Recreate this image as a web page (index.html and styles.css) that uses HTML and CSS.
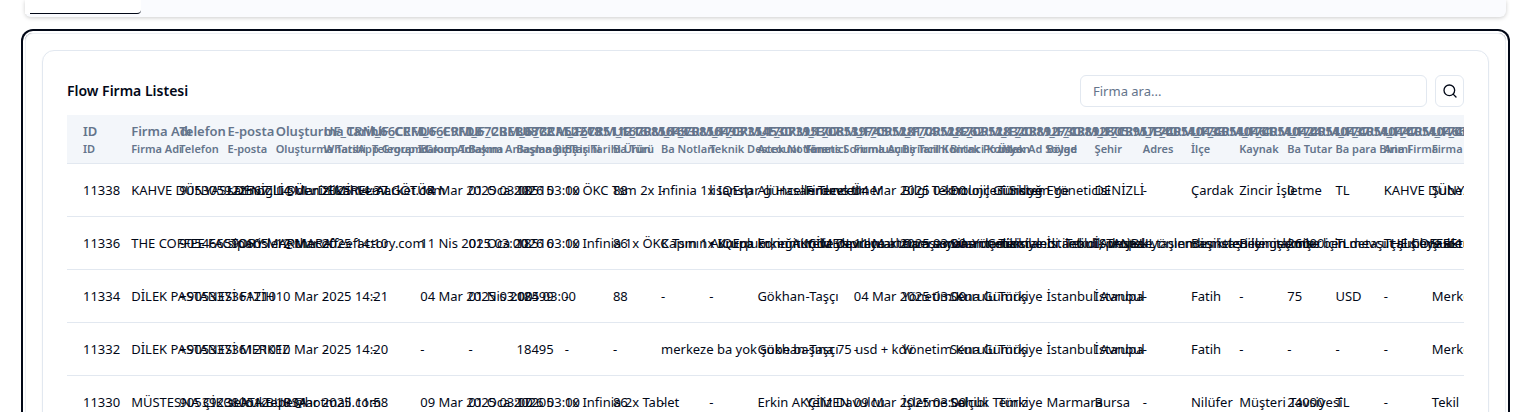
FILE: index.html
```
<!DOCTYPE html>
<html lang="tr">
<head>
<meta charset="utf-8">
<title>Flow Firma Listesi</title>
<link rel="stylesheet" href="styles.css">
</head>
<body>
<nav class="tabs"><button class="tab" type="button" aria-label="Firmalar"></button></nav>
<main class="panel">
<section class="card">
<header class="card-head">
<h1 class="title">Flow Firma Listesi</h1>
<form class="search">
<input class="search-input" type="text" placeholder="Firma ara..." aria-label="Firma ara">
<button class="search-button" type="button" aria-label="Ara">
<svg class="icon" viewBox="0 0 24 24" fill="none" stroke="currentColor" stroke-width="2" stroke-linecap="round" stroke-linejoin="round"><circle cx="11" cy="11" r="8"/><path d="m21 21-4.3-4.3"/></svg>
</button>
</form>
</header>
<div class="table-wrap">
<table class="table">
<thead><tr id="head"></tr></thead>
<tbody id="rows"></tbody>
</table>
</div>
</section>
</main>
<script src="table.js"></script>
</body>
</html>
```
FILE: table.js
```
const columns = [
  ["ID", "ID"],
  ["Firma Adı", "Firma Adı"],
  ["Telefon", "Telefon"],
  ["E-posta", "E-posta"],
  ["Oluşturma Tarihi", "Oluşturma Tarihi"],
  ["UF_CRM_66CEFD", "WhatsApp Group Id"],
  ["UF_CRM_66E9FDE", "Telegram Group Id"],
  ["UF_CRM_672BEB0872", "Bakım Anlaşma"],
  ["UF_CRM_673CA52218", "Bakım Anlaşma Bitiş"],
  ["UF_CRM_1673511216", "Başlangıç Tarihi"],
  ["UF_CRM_1670856493", "Bitiş Tarihi Ürün"],
  ["UF_CRM_1670856493", "Ba Türü"],
  ["UF_CRM_1707354530", "Ba Notları"],
  ["UF_CRM_1707395307", "Teknik Destek Notları"],
  ["UF_CRM_1708539745", "Account Yönetici"],
  ["UF_CRM_1709528174", "Finans Sorumlusu"],
  ["UF_CRM_1709528262", "Firma Açılış Tarihi"],
  ["UF_CRM_1709528320", "Birincil Kontak Pozisyon"],
  ["UF_CRM_1713892730", "Birinci Kontak Ad Soyad"],
  ["UF_CRM_1713892805", "Ülke"],
  ["UF_CRM_1713957340", "Bölge"],
  ["UF_CRM_1740540433", "Şehir"],
  ["UF_CRM_1740540461", "Adres"],
  ["UF_CRM_1740540424", "İlçe"],
  ["UF_CRM_1740540437", "Kaynak"],
  ["UF_CRM_1740540447", "Ba Tutar"],
  ["UF_CRM_1740540466", "Ba para Birimi"],
  ["UF_CRM_1740578653", "Ana Firma"],
  ["UF_CRM_1740573253", "Firma Türü"]
];

const firms = [
  ["11338", "KAHVE DÜNYASI DENİZLİ SÜL. DEMİREL ALGÖTÜR", "905305922567", "satinoglu@denizlikahvemarket.com", "14 Mar 2025 14:37", "-", "-", "14 Mar 2025 03:00", "01 Oca 2026 03:00", "18515", "1x ÖKC Tsm 2x Infinia 1x IQErp", "88", "-", "lisanslar güncellenecektir", "Ali Hasan Tuncer", "Firdevs Üner", "14 Mar 2025 03:00", "Bilgi Teknolojileri Sistem Yöneticisi", "Ertunç Gündoğ", "Türkiye", "Ege", "DENİZLİ", "-", "Çardak", "Zincir İşletme", "0", "TL", "KAHVE DÜNYASI", "Şube"],
  ["11336", "THE COFFEE FACTORY MARMARA", "905466590605", "siparisler@thecoffeefactory.com", "12 Mar 2025 14:10", "-", "-", "11 Nis 2025 03:00", "01 Oca 2026 03:00", "18516", "1x Infinia 1x ÖKC Tsm 1x IQErp", "86", "Kapının Avrupa konumunda yapılan aktarım sonrası destek talebi iletildi, projede taşınması istenilen işlemler için mevcut şubeye aktarılması", "• Kurulum, eğitim ve devreye alma aşamaları tamamlandı. Teknik destek yönlendirmeleri ile geçmişe ben detaşı çalışılması 10.03.2025 (CC-ETAŞ)", "Erkin AKÇİMEN", "Yeliz Davulcu", "11 Mar 2025 03:00", "Operasyon Yöneticisi", "Sinan Çelik", "Türkiye", "İstanbul Avrupa", "İSTANBUL", "-", "Beşiktaş", "Beyin takımı", "26000", "TL", "THE COFFEE", "Şube"],
  ["11334", "DİLEK PASTANESİ FATİH", "+905337361210", "-", "10 Mar 2025 14:21", "-", "-", "04 Mar 2025 03:00", "01 Nis 2025 03:00", "18499", "-", "88", "-", "-", "Gökhan", "-Taşçı", "04 Mar 2025 03:00", "Yönetim Kurulu", "Sena Gümüş", "Türkiye", "İstanbul Avrupa", "İstanbul", "-", "Fatih", "-", "75", "USD", "-", "Merkez"],
  ["11332", "DİLEK PASTANESİ MERKEZ", "+905337361210", "-", "10 Mar 2025 14:20", "-", "-", "-", "-", "18495", "-", "-", "merkeze ba yok şube başına 75 usd + kdv", "-", "Gökhan", "-Taşçı", "-", "Yönetim Kurulu", "Sena Gümüş", "Türkiye", "İstanbul Avrupa", "İstanbul", "-", "Fatih", "-", "-", "-", "-", "Merkez"],
  ["11330", "MÜSTESNA ÇİKOLATA BURSA", "905392380612", "selcuktepe@hotmail.com", "10 Mar 2025 11:58", "-", "-", "09 Mar 2025 03:00", "01 Oca 2026 03:00", "17205", "1x Infinia 2x Tablet", "86", "-", "-", "Erkin AKÇİMEN", "Yeliz Davulcu", "09 Mar 2025 03:00", "İşletme Sahibi", "Selçuk Temiz", "Türkiye", "Marmara", "Bursa", "-", "Nilüfer", "Müşteri Tavsiyesi", "24000", "TL", "-", "Tekil"]
];

const head = document.getElementById("head");
for (const [name, label] of columns) {
  const th = document.createElement("th");
  th.scope = "col";
  for (const [text, cls] of [[name, "field"], [label, "label"]]) {
    const div = document.createElement("div");
    div.className = cls;
    div.textContent = text;
    th.append(div);
  }
  head.append(th);
}

const body = document.getElementById("rows");
for (const firm of firms) {
  const tr = body.insertRow();
  for (const value of firm) tr.insertCell().textContent = value;
}
```
FILE: styles.css
```
* { box-sizing: border-box; }
body {
  margin: 0;
  padding: 0 27px 0 25px;
  height: 100vh;
  overflow: hidden;
  background: #fff;
  color: #020817;
  font-family: "Segoe UI", "Noto Sans", sans-serif;
  font-size: 13px;
  line-height: 20px;
}
button, input { font: inherit; color: inherit; }
.tabs {
  display: flex;
  height: 17px;
  padding: 0 5px 3px;
  background: #fafbfe;
  border-radius: 0 0 6px 6px;
  box-shadow: 0 1px 4px rgba(0, 0, 0, .2);
}
.tab {
  width: 111px;
  padding: 0;
  border: 0;
  border-bottom: 1px solid #020817;
  border-radius: 0 0 4px 0;
  background: #fff;
  box-shadow: -5px 0 0 #fff;
}
.panel {
  margin-top: 16px;
  padding: 16px;
  border: 1px solid #eef1f5;
  border-radius: 8px;
  box-shadow: 0 0 0 2px #fff, 0 0 0 4px #020817;
}
.card {
  padding: 24px;
  border: 1px solid #e2e8f0;
  border-radius: 12px;
  box-shadow: 0 1px 2px rgba(0, 0, 0, .05);
}
.card-head {
  display: flex;
  align-items: center;
  justify-content: space-between;
  margin-bottom: 8px;
}
.title { margin: 0; font-size: 14px; font-weight: 600; }
.search { display: flex; gap: 8px; width: 384px; }
.search-input {
  flex: 1;
  min-width: 0;
  height: 32px;
  padding: 0 12px;
  border: 1px solid #e2e8f0;
  border-radius: 6px;
  background: #fff;
}
.search-input::placeholder { color: #64748b; opacity: 1; }
.search-button {
  display: grid;
  place-items: center;
  width: 29px;
  padding: 0;
  border: 1px solid #e2e8f0;
  border-radius: 6px;
  background: #fff;
}
.icon { width: 16px; height: 16px; }
.table-wrap { overflow: hidden; }
.table {
  width: 100%;
  table-layout: fixed;
  border-collapse: separate;
  border-spacing: 0;
  white-space: nowrap;
}
.table thead { background: #f3f6fa; }
.table th {
  height: 49px;
  padding: 0 0 0 16px;
  border-bottom: 1px solid #e2e8f0;
  color: #64748b;
  font-weight: 600;
  text-align: left;
}
.label { font-size: 11px; line-height: 16px; }
.table td {
  height: 53px;
  padding: 0 0 0 16px;
  border-bottom: 1px solid #e2e8f0;
}
```
